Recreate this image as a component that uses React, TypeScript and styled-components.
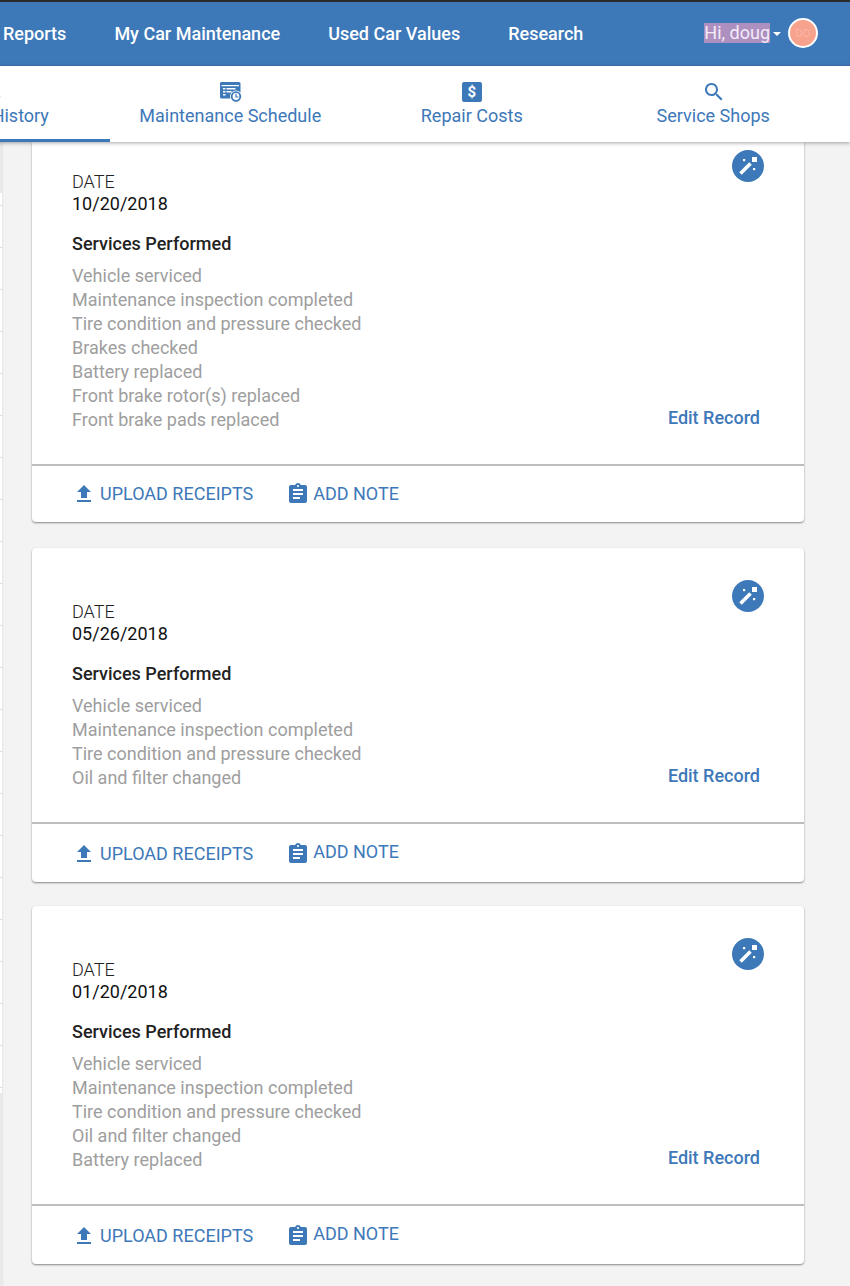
import React from "react";
import styled, { createGlobalStyle } from "styled-components";

const BLUE = "#3d78b9";

const Global = createGlobalStyle`
  html, body { margin: 0; padding: 0; background: #f3f3f3; }
  body { font-family: Roboto, "Liberation Sans", sans-serif; overflow: hidden; }
  #root { width: 850px; height: 1286px; overflow: hidden; }
`;

const Page = styled.div`
  width: 850px;
  height: 1286px;
  overflow: hidden;
  display: flex;
  flex-direction: column;
  background: #f3f3f3;
`;

const TopLine = styled.div`
  height: 2px;
  flex: none;
  background: #2b2b2b;
`;

const NavBar = styled.nav`
  height: 64px;
  flex: none;
  box-sizing: border-box;
  background: ${BLUE};
  display: flex;
  align-items: center;
  gap: 48px;
  padding: 0 32px 2px 3px;
  color: #fff;
  font-size: 18px;
  font-weight: 500;
`;

const NavLink = styled.span`
  white-space: nowrap;
`;

const UserMenu = styled.div`
  margin-left: auto;
  display: flex;
  align-items: center;
  font-weight: 400;
`;

const Selected = styled.span`
  background: #ad8fc0;
  color: #f3ecf6;
  line-height: 20px;
  height: 20px;
`;

const Caret = styled.span`
  width: 0;
  height: 0;
  margin: 2px 7px 0 3px;
  border-left: 4px solid transparent;
  border-right: 4px solid transparent;
  border-top: 4px solid #fff;
`;

const Avatar = styled.div`
  width: 30px;
  height: 30px;
  box-sizing: border-box;
  border-radius: 50%;
  border: 2px solid #fff;
  background: #f7a28c;
  color: #fbb5a9;
  font-size: 11px;
  display: flex;
  align-items: center;
  justify-content: center;
`;

const TabBar = styled.div`
  height: 76px;
  flex: none;
  position: relative;
  z-index: 2;
  background: #fff;
  box-shadow: 0 1px 4px rgba(0, 0, 0, 0.35);
  display: grid;
  grid-template-columns: repeat(4, 241.5px);
  margin-left: -132px;
  width: 982px;
`;

const Tab = styled.div<{ $active?: boolean }>`
  display: flex;
  flex-direction: column;
  align-items: center;
  box-sizing: border-box;
  padding-top: 14px;
  color: ${BLUE};
  font-size: 18px;
  line-height: 24px;
  white-space: nowrap;
  border-bottom: 3px solid ${(p) => (p.$active ? BLUE : "transparent")};
`;

const TabIcon = styled.svg`
  width: 24px;
  height: 24px;
  fill: ${BLUE};
  display: block;
`;

const SearchIcon = styled(TabIcon)`
  margin-left: 2px;
`;

const DollarBadge = styled.span`
  width: 20px;
  height: 20px;
  margin: 2px 0;
  border-radius: 2px;
  background: ${BLUE};
  color: #fff;
  font-size: 15px;
  font-weight: 700;
  line-height: 20px;
  text-align: center;
`;

const Body = styled.div`
  display: flex;
  flex: 1;
  min-height: 0;
`;

const Rail = styled.div`
  width: 2px;
  flex: none;
  background: #e9e9e9;
  box-shadow: 1px 0 2px rgba(0, 0, 0, 0.06);
`;

const RailList = styled.div`
  margin-top: 51px;
  height: 900px;
  background: repeating-linear-gradient(
      to bottom,
      #fff 0,
      #fff 41px,
      #dcdcdc 41px,
      #dcdcdc 42px
    )
    0 -29px / 100% 42px;
`;

const Cards = styled.main`
  width: 772px;
  margin-left: 30px;
  display: flex;
  flex-direction: column;
`;

const Card = styled.section<{ $gap: number; $clipped?: boolean }>`
  background: #fff;
  margin-top: ${(p) => p.$gap}px;
  border-radius: ${(p) => (p.$clipped ? "0 0 4px 4px" : "4px")};
  box-shadow: 0 1px 2px rgba(0, 0, 0, 0.45);
`;

const CardBody = styled.div<{ $top: number }>`
  display: flex;
  justify-content: space-between;
  padding: ${(p) => p.$top}px 40px 32px;
`;

const Details = styled.div`
  padding-top: 21px;
`;

const DateLabel = styled.div`
  font-size: 18px;
  font-weight: 300;
  line-height: 22px;
  color: #222;
`;

const DateValue = styled.div`
  font-size: 18px;
  line-height: 22px;
  color: #111;
`;

const SectionTitle = styled.h3`
  margin: 17px 0 8px;
  font-size: 18px;
  font-weight: 500;
  line-height: 24px;
  color: #222;
`;

const ServiceList = styled.ul`
  list-style: none;
  margin: 0;
  padding: 0;
`;

const ServiceItem = styled.li`
  font-size: 18px;
  line-height: 24px;
  color: #9e9e9e;
`;

const Side = styled.div`
  display: flex;
  flex-direction: column;
  justify-content: space-between;
  align-items: flex-end;
`;

const WandButton = styled.svg`
  width: 32px;
  height: 32px;
  display: block;
`;

const EditLink = styled.span`
  margin: 0 4px 2px 0;
  font-size: 18px;
  font-weight: 500;
  line-height: 24px;
  color: ${BLUE};
`;

const Footer = styled.div<{ $height: number; $top: number }>`
  height: ${(p) => p.$height}px;
  border-top: 2px solid #bdbdbd;
  display: flex;
  padding: ${(p) => p.$top}px 0 0 40px;
  gap: 33px;
  box-sizing: content-box;
`;

const Action = styled.span<{ $gap: number }>`
  display: inline-flex;
  align-items: center;
  height: 24px;
  gap: ${(p) => p.$gap}px;
  font-size: 18px;
  color: ${BLUE};
  white-space: nowrap;
`;

const ActionLabel = styled.span<{ $lift: number }>`
  margin-bottom: ${(p) => p.$lift * 2}px;
`;

const ActionIcon = styled.svg`
  width: 24px;
  height: 24px;
  fill: ${BLUE};
  flex: none;
`;

const Wand = () => (
  <WandButton viewBox="0 0 32 32">
    <circle cx="16" cy="16" r="16" fill={BLUE} />
    <path d="M8.5 23.5 L18.5 13.5" stroke="#fff" strokeWidth="3.6" fill="none" />
    <rect x="20" y="7" width="5" height="5" fill="#fff" />
    <rect x="11" y="9" width="2.2" height="2.2" fill="#fff" />
    <rect x="21" y="18" width="2.2" height="2.2" fill="#fff" />
  </WandButton>
);

const UPLOAD = "M9 16h6v-6h4l-7-7-7 7h4zm-4 2h14v2H5z";
const NOTE =
  "M19 3h-4.18C14.4 1.84 13.3 1 12 1c-1.3 0-2.4.84-2.82 2H5c-1.1 0-2 .9-2 2v14c0 1.1.9 2 2 2h14c1.1 0 2-.9 2-2V5c0-1.1-.9-2-2-2zm-7 0c.55 0 1 .45 1 1s-.45 1-1 1-1-.45-1-1 .45-1 1-1zm2 14H7v-2h7v2zm3-4H7v-2h10v2zm0-4H7V7h10v2z";
const SEARCH =
  "M15.5 14h-.79l-.28-.27C15.41 12.59 16 11.11 16 9.5 16 5.91 13.09 3 9.5 3S3 5.91 3 9.5 5.91 16 9.5 16c1.61 0 3.09-.59 4.23-1.57l.27.28v.79l5 4.99L20.49 19l-4.99-5zm-6 0C7.01 14 5 11.99 5 9.5S7.01 5 9.5 5 14 7.01 14 9.5 11.99 14 9.5 14z";

const ScheduleIcon = () => (
  <TabIcon viewBox="0 0 24 24">
    <path d="M4 2h17a1.5 1.5 0 0 1 1.5 1.5V13h-9v5.5H3.500A1.500 1.500 0 0 1 2 17V3.500A1.500 1.500 0 0 1 4 2z" />
    <rect x="3.500" y="5" width="17.500" height="1.200" fill="#fff" />
    <rect x="5" y="8" width="2.500" height="1.500" fill="#fff" />
    <rect x="8.500" y="8" width="9" height="1.500" fill="#fff" />
    <rect x="5" y="11" width="2.500" height="1.500" fill="#fff" />
    <rect x="8.500" y="11" width="5" height="1.500" fill="#fff" />
    <rect x="5" y="14" width="2.500" height="1.500" fill="#fff" />
    <circle cx="18" cy="16.500" r="6" fill="#fff" />
    <circle cx="18" cy="16.500" r="4.300" fill="none" stroke={BLUE} strokeWidth="1.800" />
    <path d="M18 14V17H20.500" fill="none" stroke={BLUE} strokeWidth="1.200" />
  </TabIcon>
);

type ServiceRecord = {
  date: string;
  services: string[];
  gap: number;
  top: number;
  clipped?: boolean;
  footerTop: number;
  noteLift: number;
};

const records: ServiceRecord[] = [
  {
    date: "10/20/2018",
    services: [
      "Vehicle serviced",
      "Maintenance inspection completed",
      "Tire condition and pressure checked",
      "Brakes checked",
      "Battery replaced",
      "Front brake rotor(s) replaced",
      "Front brake pads replaced",
    ],
    gap: 0,
    top: 8,
    clipped: true,
    footerTop: 16,
    noteLift: 1,
  },
  {
    date: "05/26/2018",
    services: [
      "Vehicle serviced",
      "Maintenance inspection completed",
      "Tire condition and pressure checked",
      "Oil and filter changed",
    ],
    gap: 26,
    top: 32,
    footerTop: 18,
    noteLift: 3,
  },
  {
    date: "01/20/2018",
    services: [
      "Vehicle serviced",
      "Maintenance inspection completed",
      "Tire condition and pressure checked",
      "Oil and filter changed",
      "Battery replaced",
    ],
    gap: 24,
    top: 32,
    footerTop: 18,
    noteLift: 3,
  },
];

const navItems = ["Reports", "My Car Maintenance", "Used Car Values", "Research"];

export default function App() {
  return (
    <Page>
      <Global />
      <TopLine />
      <NavBar>
        {navItems.map((n) => (
          <NavLink key={n}>{n}</NavLink>
        ))}
        <UserMenu>
          <Selected>Hi, doug</Selected>
          <Caret />
          <Avatar>DO</Avatar>
        </UserMenu>
      </NavBar>
      <TabBar>
        <Tab $active>
          <ScheduleIcon />
          Service History
        </Tab>
        <Tab>
          <ScheduleIcon />
          Maintenance Schedule
        </Tab>
        <Tab>
          <DollarBadge>$</DollarBadge>
          Repair Costs
        </Tab>
        <Tab>
          <SearchIcon viewBox="0 0 24 24">
            <path d={SEARCH} />
          </SearchIcon>
          Service Shops
        </Tab>
      </TabBar>
      <Body>
        <Rail>
          <RailList />
        </Rail>
        <Cards>
          {records.map((r) => (
            <Card key={r.date} $gap={r.gap} $clipped={r.clipped}>
              <CardBody $top={r.top}>
                <Details>
                  <DateLabel>DATE</DateLabel>
                  <DateValue>{r.date}</DateValue>
                  <SectionTitle>Services Performed</SectionTitle>
                  <ServiceList>
                    {r.services.map((s) => (
                      <ServiceItem key={s}>{s}</ServiceItem>
                    ))}
                  </ServiceList>
                </Details>
                <Side>
                  <Wand />
                  <EditLink>Edit Record</EditLink>
                </Side>
              </CardBody>
              <Footer $height={40} $top={r.footerTop}>
                <Action $gap={4}>
                  <ActionIcon viewBox="0 0 24 24">
                    <path d={UPLOAD} />
                  </ActionIcon>
                  <ActionLabel $lift={1}>UPLOAD RECEIPTS</ActionLabel>
                </Action>
                <Action $gap={3}>
                  <ActionIcon viewBox="0 0 24 24">
                    <path d={NOTE} />
                  </ActionIcon>
                  <ActionLabel $lift={r.noteLift}>ADD NOTE</ActionLabel>
                </Action>
              </Footer>
            </Card>
          ))}
        </Cards>
      </Body>
    </Page>
  );
}
